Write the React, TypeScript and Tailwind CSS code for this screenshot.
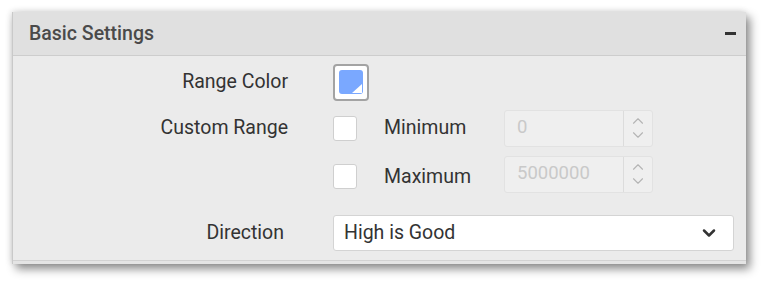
import { ChevronDown, ChevronUp } from "lucide-react";

const font = { fontFamily: "Roboto, 'Noto Sans', sans-serif" };

function NumberBox({ value }: { value: string }) {
  return (
    <div className="flex h-[37px] w-[149px] rounded-[3px] border border-[#e2e2e2] bg-[#efefef]">
      <div className="flex flex-1 items-center pl-[12px] text-[18.5px] text-[#c9c9c9]">
        {value}
      </div>
      <div className="flex w-[29px] flex-col items-center justify-center border-l border-[#dcdcdc] text-[#b4b4b4]">
        <ChevronUp size={18} strokeWidth={1.5} className="-mb-[2px]" />
        <ChevronDown size={18} strokeWidth={1.5} className="-mt-[2px]" />
      </div>
    </div>
  );
}

function CheckBox() {
  return <div className="h-[25px] w-[24px] rounded-[3px] border border-[#cfcfcf] bg-white" />;
}

export default function App() {
  return (
    <main className="min-h-screen bg-white pl-[12px] pt-[12px]" style={font}>
      <div className="w-[734px] border-l border-[#c9c9c9] bg-[#ebebeb] shadow-[4px_5px_9px_rgba(0,0,0,0.45),-1px_-1px_6px_rgba(0,0,0,0.12)]">

        {/* HEADER */}
        <div className="flex h-[44px] items-center justify-between border-b border-[#cdcdcd] bg-[#e0e0e0] pl-[16px] pr-[10px]">
          <span className="text-[19.5px] font-medium text-[#4a4a4a]">
            Basic Settings
          </span>
          <span className="h-[3px] w-[11px] bg-[#333]" />
        </div>

        {/* BODY */}
        <div className="pt-[7px] text-[19.5px] text-[#333]">

          {/* RANGE COLOR */}
          <div className="flex h-[38px] items-center">
            <div className="w-[275px] text-right">Range Color</div>
            <div className="ml-[45px] flex h-[37px] w-[36px] items-center justify-center rounded-[4px] border-2 border-[#a3a3a3] bg-white">
              <div className="relative h-[24px] w-[24px] rounded-[3px] bg-[#7aa8ff]">
                <svg width="10" height="9" viewBox="0 0 10 9" className="absolute bottom-[1px] right-[1px]">
                  <polygon points="10,0 10,9 0,9" fill="#fff" />
                </svg>
              </div>
            </div>
          </div>

          {/* CUSTOM RANGE */}
          <div className="mt-[8px] flex h-[38px] items-center">
            <div className="w-[275px] text-right">Custom Range</div>
            <div className="ml-[45px]">
              <CheckBox />
            </div>
            <div className="ml-[27px] w-[120px]">Minimum</div>
            <NumberBox value="0" />
          </div>

          <div className="mt-[8px] flex h-[38px] items-center">
            <div className="w-[275px]" />
            <div className="ml-[45px] mt-[4px]">
              <CheckBox />
            </div>
            <div className="ml-[27px] mt-[5px] w-[120px]">Maximum</div>
            <NumberBox value="5000000" />
          </div>

          {/* DIRECTION */}
          <div className="mt-[22px] flex h-[36px] items-center">
            <div className="w-[275px] pr-[4px] text-right">Direction</div>
            <div className="ml-[45px] flex h-[36px] w-[401px] items-center justify-between rounded-[3px] border border-[#d4d4d4] bg-white pl-[10px] pr-[14px]">
              <span>High is Good</span>
              <ChevronDown size={20} strokeWidth={3} className="text-[#333]" />
            </div>
          </div>

          <div className="mt-[9px] h-[4px] border-t border-[#d2d2d2] bg-[#e4e4e4]" />
        </div>

      </div>
    </main>
  );
}
